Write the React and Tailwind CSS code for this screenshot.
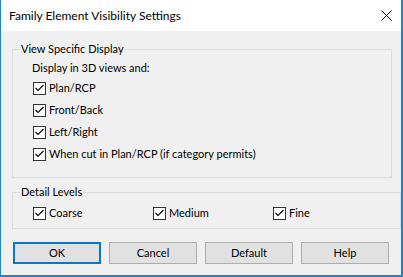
const CheckBox = () => (
  <span className="w-[13px] h-[13px] border border-[#333333] bg-white flex items-center justify-center shrink-0">
    <svg width="11" height="11" viewBox="0 0 11 11">
      <path d="M1.5 5 L4 7.5 L9.5 2" fill="none" stroke="#000000" strokeWidth="1.1" />
    </svg>
  </span>
)

const CheckRow = ({ label }) => (
  <label className="h-[22px] flex items-center gap-[3px]">
    <CheckBox />
    <span>{label}</span>
  </label>
)

const Button = ({ children, primary }) => (
  <button
    className={
      primary
        ? "w-[88px] h-[22px] bg-[#e1e1e1] border-2 border-[#0078d7] text-black"
        : "w-[88px] h-[22px] bg-[#e1e1e1] border border-[#adadad] text-black"
    }
  >
    {children}
  </button>
)

const App = () => {
  const views = ["Plan/RCP", "Front/Back", "Left/Right", "When cut in Plan/RCP (if category permits)"]
  const levels = ["Coarse", "Medium", "Fine"]

  return (
    <div
      className="w-[403px] h-[277px] flex flex-col border-l border-r-2 border-b-2 border-[#1883d7] text-[11px] text-black leading-[16px]"
      style={{ fontFamily: 'Lato, "Open Sans", sans-serif' }}
    >
      <div className="h-[31px] bg-white flex items-center justify-between pl-[8px] pr-[9px]">
        <span className="text-[12px]">Family Element Visibility Settings</span>
        <svg width="11" height="11" viewBox="0 0 11 11">
          <path d="M0.5 0.5 L10.5 10.5 M10.5 0.5 L0.5 10.5" stroke="#000000" strokeWidth="1" />
        </svg>
      </div>

      <div className="flex-1 bg-[#f0f0f0] pl-[11px] pt-[10px]">
        <fieldset className="w-[380px] h-[137px] border border-[#dcdcdc] px-[7px] pt-[3px]">
          <legend className="px-[1px]">View Specific Display</legend>
          <div className="pl-[12px]">
            <div className="mb-[1px]">Display in 3D views and:</div>
            <div className="flex flex-col pl-[1px]">
              {views.map((v) => (
                <CheckRow key={v} label={v} />
              ))}
            </div>
          </div>
        </fieldset>

        <fieldset className="w-[380px] h-[45px] mt-[6px] border border-[#dcdcdc] px-[7px] pt-[2px]">
          <legend className="px-[1px]">Detail Levels</legend>
          <div className="pl-[13px] grid grid-cols-[120px_120px_120px]">
            {levels.map((l) => (
              <CheckRow key={l} label={l} />
            ))}
          </div>
        </fieldset>

        <div className="flex gap-[8px] mt-[13px] pl-[1px]">
          <Button primary>OK</Button>
          <Button>Cancel</Button>
          <Button>Default</Button>
          <Button>Help</Button>
        </div>
      </div>
    </div>
  )
}

export default App
